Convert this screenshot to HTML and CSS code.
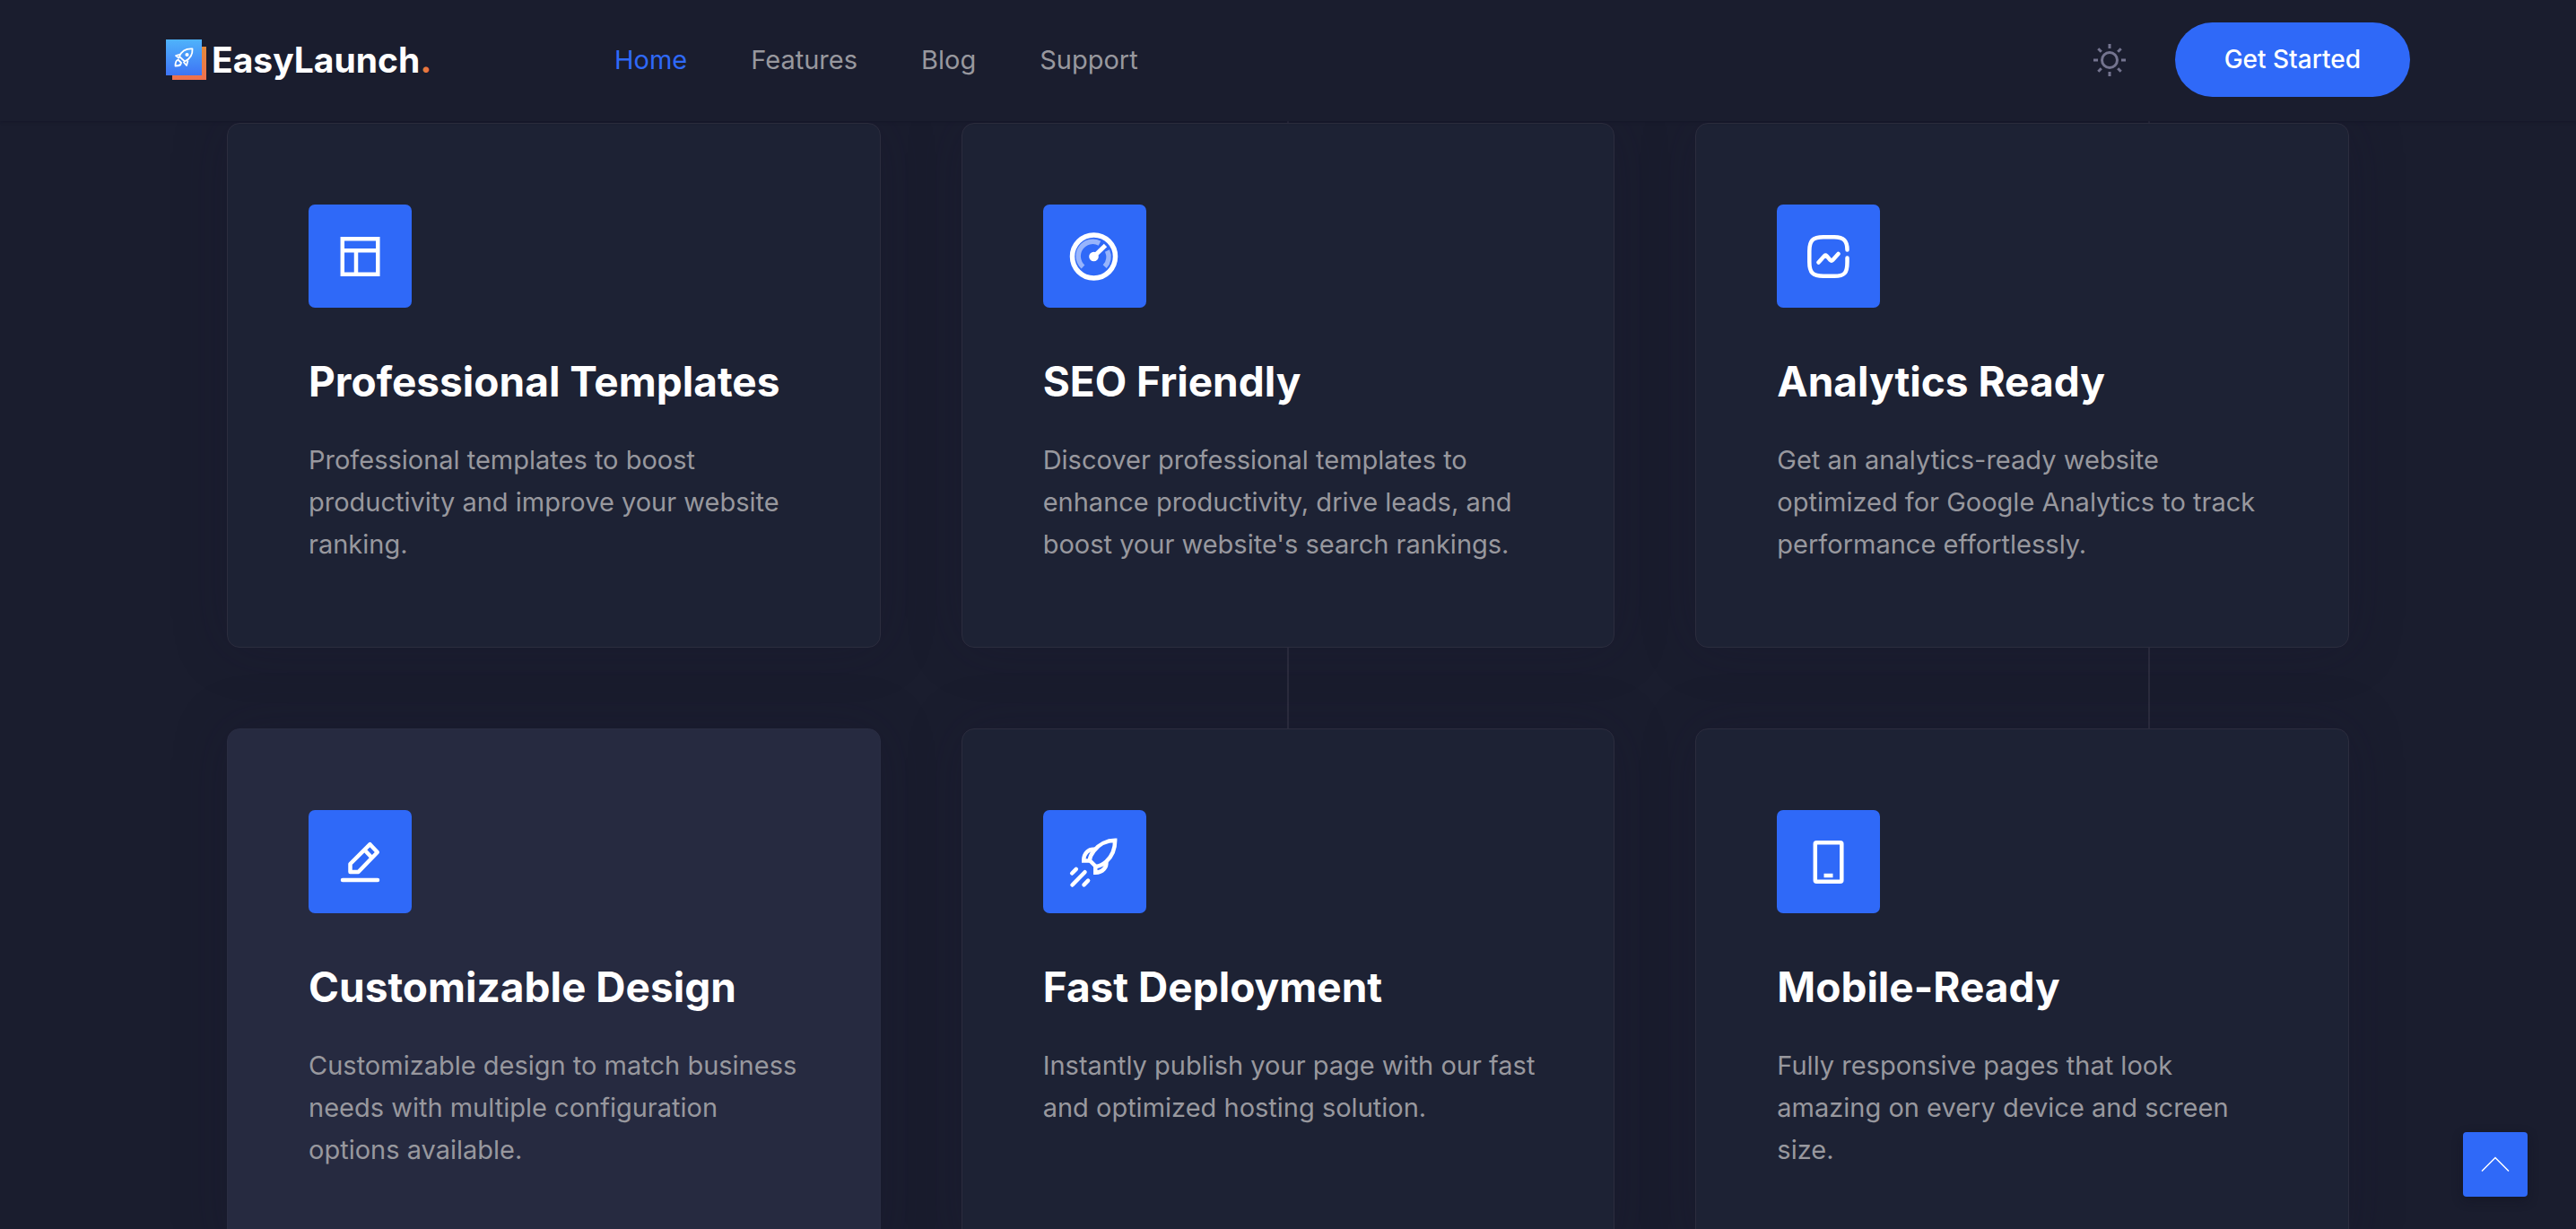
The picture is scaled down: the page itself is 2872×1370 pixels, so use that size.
FILE: index.html
```html
<!DOCTYPE html>
<html lang="en">
<head>
<meta charset="utf-8">
<meta name="viewport" content="width=device-width, initial-scale=1">
<title>EasyLaunch</title>
<link rel="stylesheet" href="styles.css">
</head>
<body>
<header class="site-header">
  <div class="header-inner">
    <a class="brand" href="#home">
      <svg class="brand-mark" viewBox="0 0 46 46" aria-hidden="true">
        <defs>
          <linearGradient id="sky" x1="0" y1="0" x2="0" y2="1"><stop offset="0" stop-color="#4fb3fb"/><stop offset="1" stop-color="#3e74f5"/></linearGradient>
          <linearGradient id="sun" x1="0" y1="0" x2="0" y2="1"><stop offset="0" stop-color="#e2893a"/><stop offset="1" stop-color="#f0704f"/></linearGradient>
        </defs>
        <rect x="7" y="8" width="38" height="37" fill="url(#sun)"/>
        <rect width="40" height="40" fill="url(#sky)"/>
        <g fill="none" stroke="#fff" stroke-width="1.8" stroke-linejoin="round">
          <path d="M15 19c2-5 7-9 14.500-8.500C30 18 26 22 21 24.500z"/>
          <path d="M16 16.500l-5 1.500 4 3M24.500 23.500L23 29l-3.500-4M13.500 22.500c-3 1-3 4-3 7 3 0 6 0 6.500-3.500z"/>
          <circle cx="23.500" cy="17" r="1.200"/>
        </g>
      </svg>
      <span class="brand-name">EasyLaunch<span class="brand-dot">.</span></span>
    </a>
    <nav class="main-nav" aria-label="Main">
      <a class="nav-link is-active" href="#home">Home</a>
      <a class="nav-link" href="#features">Features</a>
      <a class="nav-link" href="#blog">Blog</a>
      <a class="nav-link" href="#support">Support</a>
    </nav>
    <div class="header-actions">
      <button class="theme-toggle" type="button" aria-label="Toggle theme">
        <svg viewBox="0 0 38 38" fill="none" stroke="currentColor" stroke-width="3" aria-hidden="true">
          <circle cx="19" cy="19" r="8.500"/>
          <path d="M19 1v5M19 32v5M1 19h5M32 19h5M6.300 6.300l3.500 3.500M28.200 28.200l3.500 3.500M6.300 31.700l3.500-3.500M28.200 9.800l3.500-3.500"/>
        </svg>
      </button>
      <button class="cta" type="button">Get Started</button>
    </div>
  </div>
</header>

<main class="features" id="features">
  <div class="feature-grid">
    <article class="card">
      <div class="card-icon">
        <svg viewBox="0 0 60 60" fill="none" stroke="#fff" stroke-width="4.500" aria-hidden="true"><path d="M9.800 10.200h39.500v39.500H9.800zM9.800 23.200h39.500M25 23.200v26.500"/></svg>
      </div>
      <h2 class="card-title">Professional Templates</h2>
      <p class="card-text">Professional templates to boost productivity and improve your website ranking.</p>
    </article>
    <article class="card">
      <div class="card-icon">
        <svg viewBox="0 0 60 60" fill="none" stroke="#fff" stroke-width="5.500" aria-hidden="true">
          <circle cx="29.500" cy="30" r="24"/>
          <path d="M17.500 41.500A16.200 16.200 0 0 1 36 15.200M44.500 23.500A16.200 16.200 0 0 1 41.700 41.200" opacity=".5"/>
          <circle cx="29.500" cy="30" r="5.300" fill="#fff" stroke="none"/>
          <path d="M29.500 30L42.500 17.500" stroke-width="4.800"/>
        </svg>
      </div>
      <h2 class="card-title">SEO Friendly</h2>
      <p class="card-text">Discover professional templates to enhance productivity, drive leads, and boost your website's search rankings.</p>
    </article>
    <article class="card">
      <div class="card-icon">
        <svg viewBox="0 0 60 60" fill="none" stroke="#fff" stroke-width="4.500" stroke-linecap="round" stroke-linejoin="round" aria-hidden="true">
          <path d="M50.500 22.500C50.500 12 46.500 8.500 36 8.300H24C12 8.300 8.300 12 8.300 24v12c0 12 3.700 15.800 15.700 15.800h12c12 0 14.500-3.800 14.500-15.800v-4.500"/>
          <path d="M18.500 36.500l6.500-7.200q1.300-1.300 2.600 0l4 4.600q1.300 1.300 2.600 0L40.500 27"/>
        </svg>
      </div>
      <h2 class="card-title">Analytics Ready</h2>
      <p class="card-text">Get an analytics-ready website optimized for Google Analytics to track performance effortlessly.</p>
    </article>
    <article class="card is-highlighted">
      <div class="card-icon">
        <svg viewBox="0 0 60 60" fill="none" stroke="#fff" stroke-width="4.500" stroke-linecap="round" stroke-linejoin="round" aria-hidden="true">
          <path d="M10 50h39"/>
          <path d="M18.500 41V32L40.500 10.200l8.300 8.800L27.500 41zM34.500 16.500l8 8.500"/>
        </svg>
      </div>
      <h2 class="card-title">Customizable Design</h2>
      <p class="card-text">Customizable design to match business needs with multiple configuration options available.</p>
    </article>
    <article class="card">
      <div class="card-icon">
        <svg viewBox="0 0 60 60" fill="none" stroke="#fff" stroke-width="4.500" aria-hidden="true">
          <path d="M53.200 5.800C44 5.800 35 10.500 29.500 17.500c-3.200 4-4.200 7-4.700 10.500l7 7c4-.5 8-2.500 11.500-5.500C50 23.500 53.200 15 53.200 5.800z"/>
          <path d="M31 15.800c-7-1-13 4-12.800 12.800h6.600M43.300 29c1 7-4 12.500-12 12.700V35"/>
          <path d="M5.200 42.500l4.600-4.600M5.500 55.500L19.500 41.200M18.500 55.300l4.600-4.600" stroke-linecap="round"/>
        </svg>
      </div>
      <h2 class="card-title">Fast Deployment</h2>
      <p class="card-text">Instantly publish your page with our fast and optimized hosting solution.</p>
    </article>
    <article class="card">
      <div class="card-icon">
        <svg viewBox="0 0 60 60" fill="none" stroke="#fff" stroke-width="4.500" aria-hidden="true">
          <rect x="14.800" y="8.200" width="29.500" height="43.500" rx="1.500"/>
          <path d="M24.500 45h10"/>
        </svg>
      </div>
      <h2 class="card-title">Mobile-Ready</h2>
      <p class="card-text">Fully responsive pages that look amazing on every device and screen size.</p>
    </article>
  </div>
</main>

<a class="to-top" href="#home" aria-label="Back to top">
  <svg viewBox="0 0 32 18" fill="none" stroke="#fff" stroke-width="1.500" aria-hidden="true"><path d="M1 16.500L16 1.500l15 15"/></svg>
</a>
</body>
</html>
```
FILE: styles.css
```css
:root {
  --bg: #1a1d2e;
  --card: #1d2234;
  --line: #2c2d3e;
  --blue: #2f69f8;
  --muted: #98989e;
}

* { box-sizing: border-box; }

body {
  margin: 0;
  background: var(--bg);
  color: #fff;
  font-family: Inter, "Liberation Sans", sans-serif;
  font-size: 29px;
  line-height: 47px;
}

a { color: inherit; text-decoration: none; }
button { font: inherit; border: 0; cursor: pointer; }
svg { display: block; }

.site-header {
  position: sticky;
  top: 0;
  z-index: 2;
  background: var(--bg);
  box-shadow: 0 1px 3px rgba(16, 16, 34, .4);
}

.header-inner {
  display: flex;
  align-items: center;
  max-width: 2566px;
  margin: 0 auto;
  padding: 25px 32px 27px;
}

.brand { display: flex; align-items: center; gap: 5px; width: 500px; }
.brand-mark { width: 46px; height: 46px; }
.brand-name { font-size: 39px; font-weight: 700; }
.brand-dot { color: #e8773f; }

.main-nav { display: flex; gap: 71px; }
.nav-link { color: var(--muted); }
.nav-link.is-active { color: var(--blue); }

.header-actions { display: flex; align-items: center; gap: 54px; margin-left: auto; }

.theme-toggle { padding: 0; background: none; color: #74748f; }
.theme-toggle svg { width: 38px; height: 38px; }

.cta {
  padding: 18px 55px;
  border-radius: 42px;
  background: var(--blue);
  color: #fff;
  font-size: 28px;
  font-weight: 500;
}

.features {
  padding: 2px 32px 90px;
  background:
    linear-gradient(var(--line), var(--line)) 50% 0 / 2px 100% no-repeat,
    linear-gradient(var(--line), var(--line)) calc(50% + 960px) 0 / 2px 100% no-repeat;
}

.feature-grid {
  display: grid;
  grid-template-columns: repeat(3, 1fr);
  gap: 90px;
  max-width: 2366px;
  margin: 0 auto;
}

.card {
  min-height: 585px;
  padding: 90px 80px 90px 90px;
  border: 1px solid var(--line);
  border-radius: 14px;
  background: var(--card);
  box-shadow: 0 0 60px rgba(24, 20, 46, .25);
}

.card.is-highlighted { background: #262a40; border-color: #2a2d42; }

.card-icon {
  display: grid;
  place-items: center;
  width: 115px;
  height: 115px;
  border-radius: 7px;
  background: var(--blue);
}

.card-icon svg { width: 60px; height: 60px; }

.card-title {
  margin: 53px 0 35px;
  font-size: 46px;
  font-weight: 700;
  line-height: 58px;
}

.card-text { margin: 0; color: var(--muted); }

.to-top {
  position: fixed;
  right: 54px;
  bottom: 36px;
  display: grid;
  place-items: center;
  width: 72px;
  height: 72px;
  border-radius: 4px;
  background: var(--blue);
  box-shadow: 0 4px 12px rgba(16, 16, 30, .4);
}

.to-top svg { width: 32px; height: 18px; }
```
